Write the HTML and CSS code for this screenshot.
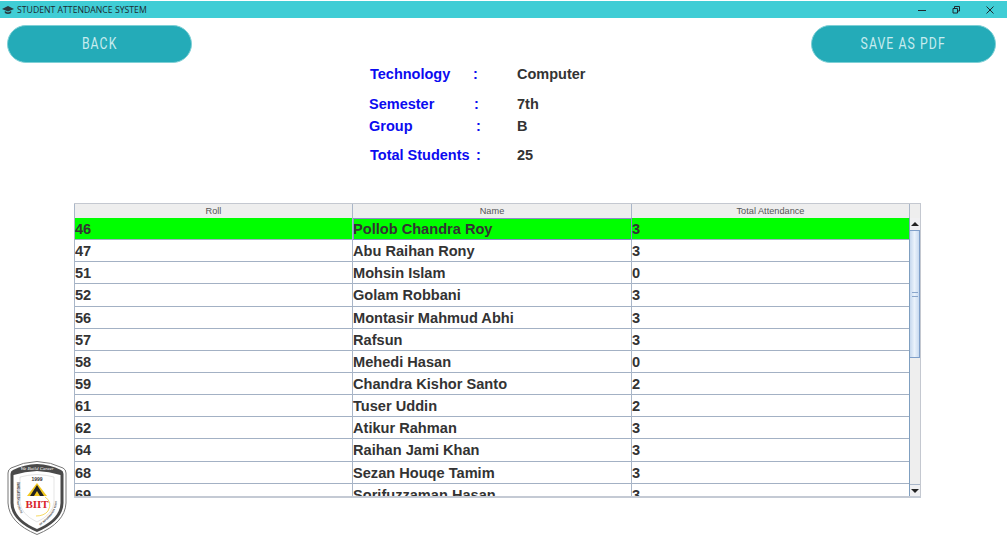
FILE: index.html
```html
<!DOCTYPE html>
<html lang="en">
<head>
  <meta charset="UTF-8" />
  <title>Student Attendance System</title>
  <link rel="stylesheet" href="styles.css">
</head>
<body>
  <div class="title-bar">
    <div class="title-left">
      <svg class="cap-icon" width="12" height="10" viewBox="0 0 12 10">
        <path d="M6 1 L12 4 L6 6.6 L0 4 Z" fill="#2b3a40"/>
        <path d="M2.8 6 L6 7.4 L9.2 6 V8 Q6 9.8 2.8 8 Z" fill="#2b3a40"/>
      </svg>
      <span>STUDENT ATTENDANCE SYSTEM</span>
    </div>
    <div class="win-controls">
      <svg width="10" height="10" viewBox="0 0 10 10"><path d="M1 5.500 H9" stroke="#1d2b30" stroke-width="1"/></svg>
      <svg width="10" height="10" viewBox="0 0 10 10"><path d="M2 3.500 H6.500 V8 H2 Z M3.500 3.500 V1.500 H8.500 V6 H6.500" fill="none" stroke="#1d2b30" stroke-width="1"/></svg>
      <svg width="10" height="10" viewBox="0 0 10 10"><path d="M1.500 1.500 L8.500 8.500 M8.500 1.500 L1.500 8.500" stroke="#1d2b30" stroke-width="1"/></svg>
    </div>
  </div>

  <div class="action-row">
    <button class="pill-btn"><span class="pill-label">BACK</span></button>
    <button class="pill-btn"><span class="pill-label">SAVE AS PDF</span></button>
  </div>

  <div class="info">
    <div class="info-row row-tech"><span class="info-label">Technology</span><span class="info-colon">:</span><span class="info-value">Computer</span></div>
    <div class="info-row row-sem"><span class="info-label">Semester</span><span class="info-colon">:</span><span class="info-value">7th</span></div>
    <div class="info-row row-group"><span class="info-label">Group</span><span class="info-colon">:</span><span class="info-value">B</span></div>
    <div class="info-row row-total"><span class="info-label">Total Students</span><span class="info-colon">:</span><span class="info-value">25</span></div>
  </div>

  <div class="bottom">
    <svg class="logo" width="60" height="74" viewBox="0 0 60 74">
      <defs>
        <path id="arc-left" d="M10 20 V40 Q10.500 54 28 65"/>
        <path id="arc-right" d="M32 65 Q49.500 54 50 40 V20"/>
      </defs>
      <path d="M30 0.500 Q44 1 56 7 Q59 8.500 59 12 V42 Q58 62 30 73.500 Q2 62 1 42 V12 Q1 8.500 4 7 Q16 1 30 0.500 Z" fill="#fff" stroke="#777" stroke-width="1"/>
      <path d="M30 3 Q43 3.500 54 9 Q56.500 10 56.500 13 V42 Q56 60 30 71 Q4 60 3.500 42 V13 Q3.500 10 6 9 Q17 3.500 30 3 Z" fill="#4a4a4a"/>
      <path d="M30 10 Q42 10.500 53.500 14 V42 Q53 58 30 68 Q7 58 6.500 42 V14 Q18 10.500 30 10 Z" fill="#fff"/>
      <path d="M30 13.500 Q40 14 47 16 V41 Q46.500 53 30 61 Q13.500 53 13 41 V16 Q20 14 30 13.500 Z" fill="#fff" stroke="#bbb" stroke-width="0.400"/>
      <text class="logo-motto" x="30" y="9" text-anchor="middle">We Build Career</text>
      <text class="logo-year" x="30" y="20" text-anchor="middle">1999</text>
      <text class="logo-arc"><textPath href="#arc-left" startOffset="1">BANGLADESH INSTITUTE</textPath></text>
      <text class="logo-arc"><textPath href="#arc-right" startOffset="1">OF INFORMATION TECH</textPath></text>
      <path d="M30 22 L40 35 H20 Z" fill="#f2c81e"/>
      <path d="M30 24 L37 35 H33 L30 30 L27 35 H23 Z" fill="#222"/>
      <text class="logo-name" x="30" y="47" text-anchor="middle">BIIT</text>
      <path d="M38 36 Q46 41 41 50 Q37 55 29 55" fill="none" stroke="#f2c81e" stroke-width="0.700"/>
    </svg>

    <div class="table-wrap">
      <div class="table-main">
        <div class="table-head">
          <div class="head-cell">Roll</div>
          <div class="head-cell">Name</div>
          <div class="head-cell">Total Attendance</div>
        </div>
        <div class="table-body">
          <div class="row row-selected"><div class="cell">46</div><div class="cell cell-focus">Pollob Chandra Roy</div><div class="cell">3</div></div>
          <div class="row"><div class="cell">47</div><div class="cell">Abu Raihan Rony</div><div class="cell">3</div></div>
          <div class="row"><div class="cell">51</div><div class="cell">Mohsin Islam</div><div class="cell">0</div></div>
          <div class="row"><div class="cell">52</div><div class="cell">Golam Robbani</div><div class="cell">3</div></div>
          <div class="row"><div class="cell">56</div><div class="cell">Montasir Mahmud Abhi</div><div class="cell">3</div></div>
          <div class="row"><div class="cell">57</div><div class="cell">Rafsun</div><div class="cell">3</div></div>
          <div class="row"><div class="cell">58</div><div class="cell">Mehedi Hasan</div><div class="cell">0</div></div>
          <div class="row"><div class="cell">59</div><div class="cell">Chandra Kishor Santo</div><div class="cell">2</div></div>
          <div class="row"><div class="cell">61</div><div class="cell">Tuser Uddin</div><div class="cell">2</div></div>
          <div class="row"><div class="cell">62</div><div class="cell">Atikur Rahman</div><div class="cell">3</div></div>
          <div class="row"><div class="cell">64</div><div class="cell">Raihan Jami Khan</div><div class="cell">3</div></div>
          <div class="row"><div class="cell">68</div><div class="cell">Sezan Houqe Tamim</div><div class="cell">3</div></div>
          <div class="row"><div class="cell">69</div><div class="cell">Sorifuzzaman Hasan</div><div class="cell">3</div></div>
        </div>
      </div>
      <div class="scrollbar">
        <div class="scroll-head"></div>
        <div class="scroll-body">
          <div class="scroll-btn"><span class="arrow-up"></span></div>
          <div class="scroll-thumb"><span class="grip"></span></div>
          <div class="scroll-track"></div>
          <div class="scroll-btn scroll-btn-down"><span class="arrow-down"></span></div>
        </div>
      </div>
    </div>
  </div>
</body>
</html>
```
FILE: styles.css
```css
html, body {
  height: 100%;
}

body {
  margin: 0;
  background-color: #fff;
  font-family: "Liberation Sans", Arial, sans-serif;
  overflow: hidden;
}

.title-bar {
  height: 17px;
  margin-top: 1px;
  background-color: #40cdd5;
  display: flex;
  justify-content: space-between;
  align-items: center;
  padding: 0 12px 0 2px;
}

.title-left {
  display: flex;
  align-items: center;
  gap: 3px;
  font-family: "Open Sans", sans-serif;
  font-size: 8.700px;
  color: #1c2a30;
}

.win-controls {
  display: flex;
  gap: 24px;
}

.action-row {
  display: flex;
  justify-content: space-between;
  padding: 7px 11px 0 7px;
}

.pill-btn {
  width: 185px;
  height: 38px;
  padding: 0 0 2px;
  border: 1px solid #7fd0d6;
  border-radius: 19px;
  background-color: #24abb8;
  color: #c8ecef;
  font-family: "Roboto", sans-serif;
  font-size: 17px;
  letter-spacing: 1.500px;
}

/* the original button font is a condensed DIN, so squeeze the label */
.pill-label {
  display: inline-block;
  transform: scaleX(0.72);
}

.info {
  margin-top: 1px;
  margin-left: 369px;
  height: 139px;
  font-size: 14.500px;
  font-weight: bold;
}

.info-row {
  display: grid;
  align-items: center;
  height: 20px;
}

.row-tech { margin-top: 1px; margin-left: 1px; grid-template-columns: 103px 44px auto; }
.row-sem { margin-top: 10px; grid-template-columns: 105px 43px auto; }
.row-group { margin-top: 2px; grid-template-columns: 107px 41px auto; }
.row-total { margin-top: 9px; margin-left: 1px; grid-template-columns: 106px 41px auto; }

.info-label { color: #0b0bf0; }
.info-colon { color: #0b0bf0; }
.info-value { color: #333; }

.bottom {
  display: flex;
  padding-left: 7px;
}

.logo {
  flex: none;
  margin-top: 258px;
}

.logo-motto { font-family: "Liberation Serif", serif; font-style: italic; font-size: 5px; fill: #fff; }
.logo-year { font-size: 5px; font-weight: bold; fill: #333; }
.logo-arc { font-size: 2.600px; fill: #333; font-weight: bold; }
.logo-name { font-family: "Liberation Serif", serif; font-size: 11px; font-weight: bold; fill: #d8232a; }

.table-wrap {
  margin-left: 7px;
  width: 847px;
  height: 295px;
  display: flex;
  border-top: 1px solid #c4c8d0;
  border-bottom: 2px solid #c4cad4;
  box-sizing: border-box;
}

.table-main {
  flex: 1;
  min-width: 0;
  display: flex;
  flex-direction: column;
  border-left: 1px solid #a9b6c8;
}

.table-head {
  flex: none;
  display: grid;
  grid-template-columns: 278px 279px 1fr;
  height: 14px;
  background-color: #eeeeee;
}

.head-cell {
  font-size: 9.200px;
  line-height: 14px;
  text-align: center;
  color: #555;
  border-right: 1px solid #a9b6c8;
}

.head-cell:last-child {
  border-right: none;
}

.table-body {
  flex: 1;
  overflow: hidden;
}

.row {
  display: grid;
  grid-template-columns: 278px 279px 1fr;
  height: 22.150px;
  box-sizing: border-box;
  border-bottom: 1px solid #a3b1c4;
}

.row-selected {
  background-color: #00ff00;
}

.cell {
  box-sizing: border-box;
  border-right: 1px solid #a9b6c8;
  font-size: 14.600px;
  font-weight: bold;
  line-height: 22px;
  color: #333;
  white-space: nowrap;
}

.cell:last-child {
  border-right: none;
}

.cell-focus {
  outline: 1px solid #8c8cc8;
  outline-offset: -1px;
}

.scrollbar {
  flex: none;
  width: 12px;
  display: flex;
  flex-direction: column;
  background-color: #eeeeee;
  border-right: 1px solid #c4c8d0;
  box-sizing: border-box;
}

.scroll-head {
  flex: none;
  height: 14px;
  border-left: 1px solid #a9b6c8;
}

.scroll-body {
  flex: 1;
  min-height: 0;
  display: flex;
  flex-direction: column;
  border-left: 1px solid #7f9fc0;
}

.scroll-btn {
  height: 12px;
  flex: none;
  display: flex;
  align-items: center;
  justify-content: center;
  background-color: #f0f0f2;
}

.scroll-btn-down {
  box-sizing: border-box;
  border-top: 1px solid #a9b6c8;
}

.arrow-up,
.arrow-down {
  width: 0;
  height: 0;
  border-left: 4px solid transparent;
  border-right: 4px solid transparent;
}

.arrow-up { border-bottom: 4px solid #222; }
.arrow-down { border-top: 4px solid #222; }

.scroll-thumb {
  flex: none;
  height: 128px;
  box-sizing: border-box;
  border: 1px solid #7f9fc9;
  border-left: none;
  background: linear-gradient(to right, #c6d8ee, #eaf2fb 50%, #c8daf0);
  display: flex;
  align-items: center;
  justify-content: center;
}

.grip {
  width: 6px;
  height: 3px;
  border-top: 1px solid #8aa6cc;
  border-bottom: 1px solid #8aa6cc;
}

.scroll-track {
  flex: 1;
}
```
